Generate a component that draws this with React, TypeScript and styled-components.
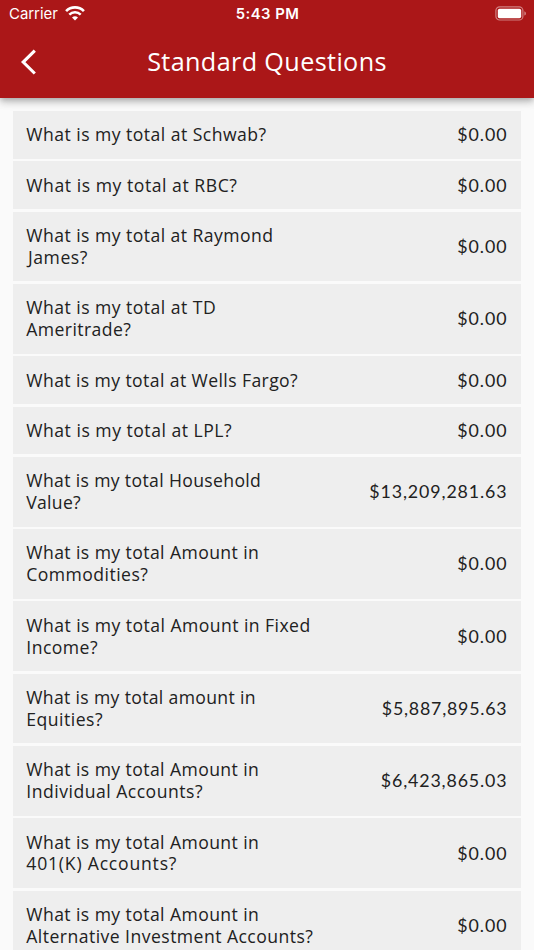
import React from 'react';
import styled, { createGlobalStyle } from 'styled-components';

const GlobalStyle = createGlobalStyle`
  html, body { margin: 0; padding: 0; background: #fafafa; }
  body { overflow: hidden; }
  *, *::before, *::after { box-sizing: border-box; }
`;

const Screen = styled.div`
  width: 534px;
  height: 950px;
  overflow: hidden;
  display: flex;
  flex-direction: column;
  background: #fafafa;
  color: #212121;
  font-family: 'Open Sans', 'Noto Sans', sans-serif;
`;

const Header = styled.header`
  flex: none;
  height: 98.2px;
  z-index: 1;
  background: #ab1718;
  color: #fff;
  box-shadow: 0 2.6px 5.2px -1.3px rgba(0, 0, 0, 0.2), 0 5.2px 6.5px rgba(0, 0, 0, 0.14), 0 1.3px 13px rgba(0, 0, 0, 0.12);
`;

const StatusBar = styled.div`
  height: 26px;
  padding: 1px 8px 0 9px;
  display: grid;
  grid-template-columns: 1fr auto 1fr;
  align-items: center;
  font-family: Inter, sans-serif;
  font-size: 15px;
  line-height: 26px;
`;

const Carrier = styled.div`
  display: flex;
  align-items: center;
  gap: 6px;
  svg { display: block; margin-top: -2px; }
`;

const CarrierName = styled.span`
  width: 49.5px;
  white-space: nowrap;
  letter-spacing: -0.05px;
`;

const Clock = styled.div`
  font-weight: 600;
  font-size: 14.8px;
  letter-spacing: 0.5px;
`;

const BatterySlot = styled.div`
  display: flex;
  justify-content: flex-end;
  padding-bottom: 1px;
`;

const TitleBar = styled.div`
  height: 72px;
  display: grid;
  grid-template-columns: 72px 1fr 72px;
  align-items: center;
`;

const BackButton = styled.button`
  width: 60px;
  height: 60px;
  padding: 0 0 0 20px;
  border: 0;
  background: none;
  color: inherit;
  display: flex;
  align-items: center;
`;

const Title = styled.h1`
  margin: 0;
  padding-bottom: 3px;
  text-align: center;
  font-size: 25.2px;
  line-height: 34px;
  font-weight: 400;
  letter-spacing: 0.37px;
  white-space: nowrap;
`;

const List = styled.ul`
  list-style: none;
  margin: 0;
  padding: 12.9px 13px 0;
  display: flex;
  flex-direction: column;
  gap: 2.6px;
`;

const Row = styled.li`
  flex: none;
  padding: 13.3px 13px 12.5px;
  display: flex;
  align-items: center;
  justify-content: space-between;
  background: #eee;
  line-height: 21.93px;
`;

const Question = styled.div`
  font-size: 17.6px;
`;

const Line = styled.span<{ $tracking: number; $indent?: number }>`
  display: block;
  white-space: nowrap;
  letter-spacing: ${(p) => p.$tracking}px;
  text-indent: ${(p) => p.$indent ?? 0.3}px;
`;

const Amount = styled.div<{ $tracking: number }>`
  font-family: Lato, sans-serif;
  font-size: 17.8px;
  letter-spacing: ${(p) => p.$tracking}px;
  margin-right: ${(p) => 1.4 - p.$tracking}px;
`;

type TrackedText = [text: string, tracking: number, indent?: number];

const questions: { lines: TrackedText[]; amount: TrackedText }[] = [
  { lines: [['What is my total at Schwab?', 0.46]], amount: ['$0.00', 0.97] },
  { lines: [['What is my total at RBC?', 0.54]], amount: ['$0.00', 0.97] },
  { lines: [['What is my total at Raymond', 0.45], ['James?', 0.55, 2]], amount: ['$0.00', 0.97] },
  { lines: [['What is my total at TD', 0.46], ['Ameritrade?', 0.42]], amount: ['$0.00', 0.97] },
  { lines: [['What is my total at Wells Fargo?', 0.4]], amount: ['$0.00', 0.97] },
  { lines: [['What is my total at LPL?', 0.5]], amount: ['$0.00', 0.97] },
  { lines: [['What is my total Household', 0.35], ['Value?', 0.28]], amount: ['$13,209,281.63', 0.89] },
  { lines: [['What is my total Amount in', 0.41], ['Commodities?', 0.45]], amount: ['$0.00', 0.97] },
  { lines: [['What is my total Amount in Fixed', 0.44], ['Income?', 0.45]], amount: ['$0.00', 0.97] },
  { lines: [['What is my total amount in', 0.33], ['Equities?', 0.48]], amount: ['$5,887,895.63', 0.78] },
  { lines: [['What is my total Amount in', 0.41], ['Individual Accounts?', 0.49]], amount: ['$6,423,865.03', 0.87] },
  { lines: [['What is my total Amount in', 0.41], ['401(K) Accounts?', 0.79]], amount: ['$0.00', 0.97] },
  { lines: [['What is my total Amount in', 0.41], ['Alternative Investment Accounts?', 0.45]], amount: ['$0.00', 0.97] },
];

const WifiIcon = () => (
  <svg width="20" height="15" viewBox="0 0 20 15" fill="none" stroke="#fff">
    <path d="M1.1 5.1a12.7 12.7 0 0 1 17.8 0" strokeWidth="2.7" />
    <path d="M4.3 8.6a8.2 8.2 0 0 1 11.4 0" strokeWidth="2.5" />
    <path d="M10 14.5 7 11.6a4.3 4.3 0 0 1 6 0Z" fill="#fff" stroke="none" />
  </svg>
);

const BatteryIcon = () => (
  <svg width="31" height="15" viewBox="0 0 31 15">
    <rect x="0.9" y="0.8" width="27" height="13.2" rx="3.8" fill="none" stroke="#fff" strokeOpacity="0.45" strokeWidth="1.2" />
    <rect x="2.8" y="2.7" width="23.4" height="9.5" rx="1.7" fill="#fff" />
    <path d="M29.4 5.2c2 .8 2 3.6 0 4.4Z" fill="#fff" fillOpacity="0.5" />
  </svg>
);

const BackIcon = () => (
  <svg width="18" height="26" viewBox="0 0 18 26" fill="none" stroke="#fff" strokeWidth="3.1">
    <path d="M14.8 1.6 3.2 13.1 14.8 24.5" />
  </svg>
);

export default function App() {
  return (
    <>
      <GlobalStyle />
      <Screen>
        <Header>
          <StatusBar>
            <Carrier><CarrierName>Carrier</CarrierName><WifiIcon /></Carrier>
            <Clock>5:43 PM</Clock>
            <BatterySlot><BatteryIcon /></BatterySlot>
          </StatusBar>
          <TitleBar>
            <BackButton aria-label="Back"><BackIcon /></BackButton>
            <Title>Standard Questions</Title>
          </TitleBar>
        </Header>
        <List>
          {questions.map(({ lines, amount }, i) => (
            <Row key={i}>
              <Question>
                {lines.map(([text, tracking, indent]) => (
                  <Line key={text} $tracking={tracking} $indent={indent}>{text}</Line>
                ))}
              </Question>
              <Amount $tracking={amount[1]}>{amount[0]}</Amount>
            </Row>
          ))}
        </List>
      </Screen>
    </>
  );
}
